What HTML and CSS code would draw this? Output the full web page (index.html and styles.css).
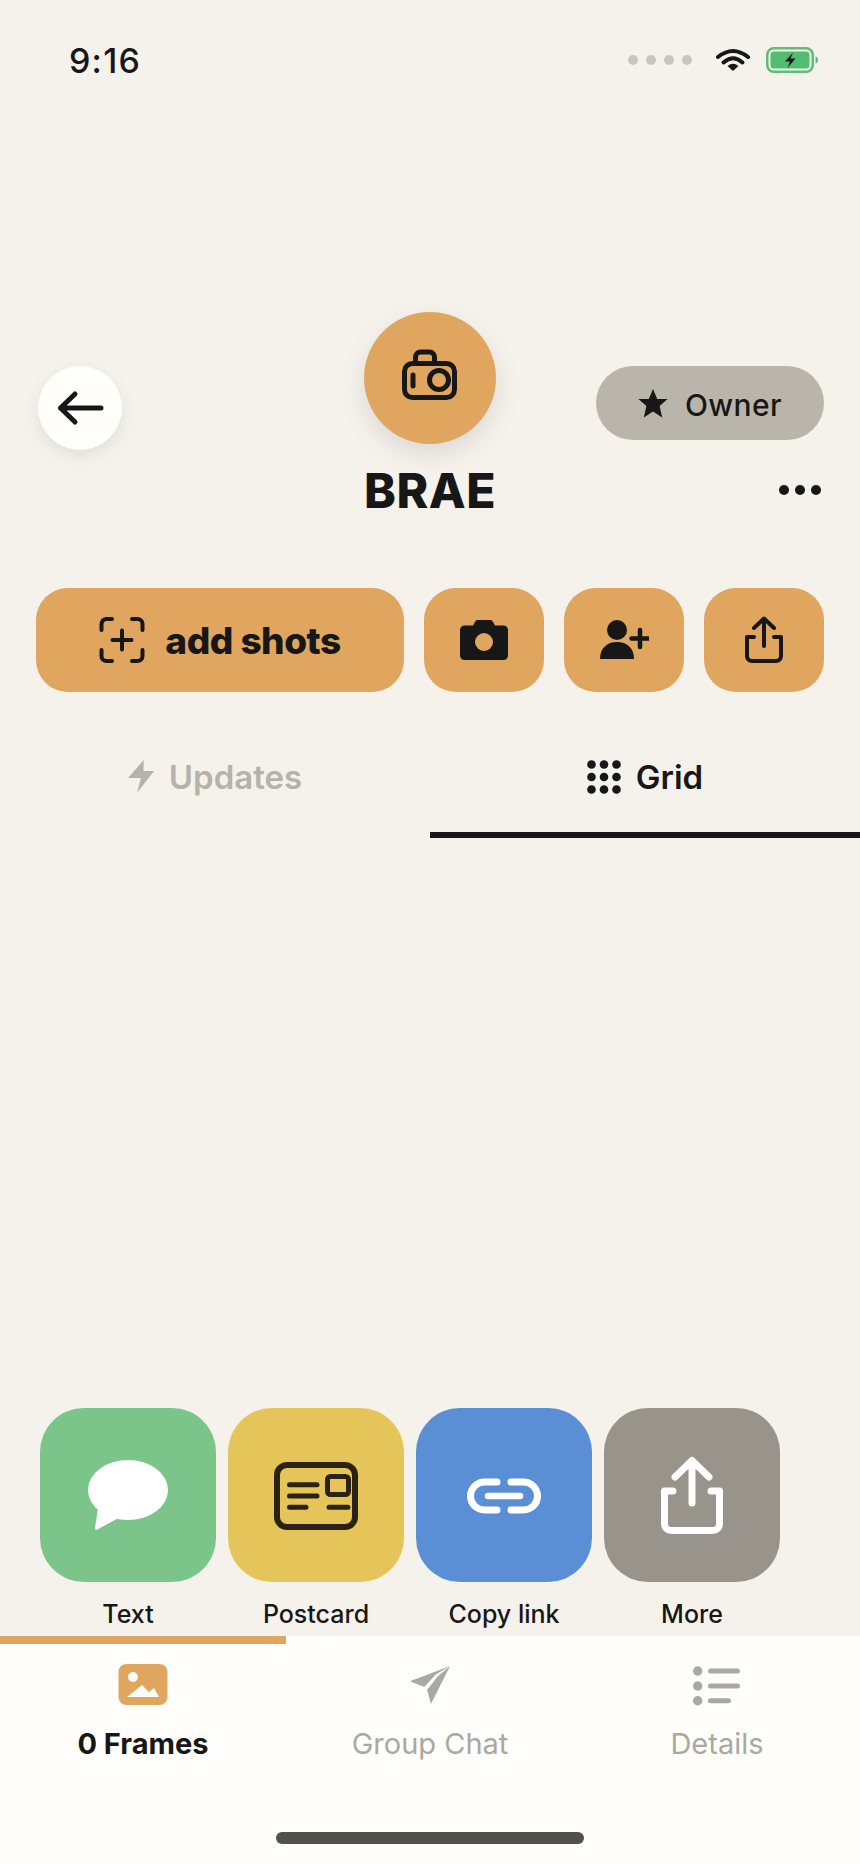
FILE: index.html
```html
<!DOCTYPE html>
<html lang="en">
<head>
<meta charset="utf-8">
<title>BRAE</title>
<link rel="stylesheet" href="styles.css">
</head>
<body>
<div class="app">
  <header class="status">
    <span class="time">9:16</span>
    <div class="status-right">
      <div class="signal"><i></i><i></i><i></i><i></i></div>
      <svg class="wifi" width="36" height="24" viewBox="0 0 36 24" fill="none" stroke="#171717" stroke-width="4" stroke-linecap="round">
        <path d="M3 9Q18-3 33 9"/>
        <path d="M8.500 14.500Q18 6 27.500 14.500"/>
        <path d="M12.500 18Q18 13.500 23.500 18L18 23Z" fill="#171717" stroke="none"/>
      </svg>
      <svg class="battery" width="53" height="26" viewBox="0 0 53 26">
        <rect x="1.250" y="1.250" width="45.500" height="23.500" rx="6.500" fill="none" stroke="#5cbf75" stroke-width="2.500"/>
        <rect x="4.500" y="4.500" width="39" height="17" rx="3.500" fill="#52bd6e"/>
        <path d="M49.500 9.500c2 .5 2.500 1.800 2.500 3.500s-.5 3-2.500 3.500z" fill="#5cbf75"/>
        <path d="M27 5.500 19 14.500h5l-2.500 6.500 8-9.500h-5z" fill="#171717"/>
      </svg>
    </div>
  </header>

  <section class="hero">
    <button class="back">
      <svg width="84" height="84" viewBox="0 0 84 84" fill="none" stroke="#171717" stroke-width="5" stroke-linecap="round" stroke-linejoin="round">
        <path d="M37 28 22.500 42 37 56M22.500 42H63"/>
      </svg>
    </button>
    <div class="avatar">
      <svg width="132" height="132" viewBox="0 0 132 132" fill="none" stroke="#171717" stroke-width="5" stroke-linecap="round" stroke-linejoin="round">
        <rect x="40.500" y="51.500" width="50" height="34" rx="8"/>
        <path d="M51.500 50v-5a5 5 0 0 1 5-5h9a5 5 0 0 1 5 5v5"/>
        <path d="M49 63V74"/>
        <circle cx="75" cy="68" r="9.500"/>
      </svg>
    </div>
    <div class="owner">
      <svg width="30" height="29" viewBox="0 0 30 29"><path d="M15 0l4.200 10h10.400l-8 7 2.600 11.500L15 22.500 5.800 28.500 8.400 17l-8-7h10.400z" fill="#171717"/></svg>
      <span class="owner-text">Owner</span>
    </div>
    <h1 class="title">BRAE</h1>
    <div class="more"><i></i><i></i><i></i></div>
  </section>

  <nav class="actions">
    <button class="action action-wide">
      <svg width="46" height="46" viewBox="0 0 46 46" fill="none" stroke="#171717" stroke-width="4" stroke-linecap="round" stroke-linejoin="round">
        <path d="M2.500 13V7a5 5 0 0 1 5-5H13M33 2h5.500a5 5 0 0 1 5 5v6M2.500 33v6a5 5 0 0 0 5 5H13M33 44h5.500a5 5 0 0 0 5-5v-6M23 13.500V32.500M13.500 23H32.500"/>
      </svg>
      <span>add shots</span>
    </button>
    <button class="action">
      <svg width="48" height="40" viewBox="0 0 48 40">
        <path d="M4.500 5.500H13L15 2a3 3 0 0 1 2.500-2h13A3 3 0 0 1 33 2l2 3.500h8.500A4.500 4.500 0 0 1 48 10v25.500a4.500 4.500 0 0 1-4.500 4.500h-39A4.500 4.500 0 0 1 0 35.500V10a4.500 4.500 0 0 1 4.500-4.500z" fill="#171717"/>
        <circle cx="24" cy="22" r="9" fill="#e0a55f"/>
      </svg>
    </button>
    <button class="action">
      <svg width="50" height="40" viewBox="0 0 50 40">
        <circle cx="18" cy="10" r="10" fill="#171717"/>
        <path d="M1 39C1 28 8 22 18 22s17 6 17 17z" fill="#171717"/>
        <path d="M41 10V27M32.500 18.500H49.500" stroke="#171717" stroke-width="4.500" stroke-linecap="round" fill="none"/>
      </svg>
    </button>
    <button class="action">
      <svg width="48" height="52" viewBox="0 0 48 52" fill="none" stroke="#171717" stroke-width="4" stroke-linecap="round" stroke-linejoin="round">
        <path d="M14 14 24 4.500 34 14M24 5V32"/>
        <path d="M14 23H7V42a5 5 0 0 0 5 5H36a5 5 0 0 0 5-5V23H34"/>
      </svg>
    </button>
  </nav>

  <div class="tabs">
    <div class="tab tab-muted">
      <svg width="26" height="34" viewBox="0 0 26 34"><path d="M15.700 0 0 18H13L9 33 26 11H15.500z" fill="#b5b2aa"/></svg>
      <span>Updates</span>
    </div>
    <div class="tab tab-active">
      <svg width="34" height="34" viewBox="0 0 34 34" fill="#171717">
        <circle cx="4.500" cy="4.500" r="4.300"/><circle cx="17" cy="4.500" r="4.300"/><circle cx="29.500" cy="4.500" r="4.300"/>
        <circle cx="4.500" cy="17" r="4.300"/><circle cx="17" cy="17" r="4.300"/><circle cx="29.500" cy="17" r="4.300"/>
        <circle cx="4.500" cy="29.500" r="4.300"/><circle cx="17" cy="29.500" r="4.300"/><circle cx="29.500" cy="29.500" r="4.300"/>
      </svg>
      <span>Grid</span>
    </div>
  </div>

  <main class="content"></main>

  <section class="share">
    <div class="share-item">
      <div class="tile tile-green">
        <svg width="176" height="174" viewBox="0 0 176 174">
          <ellipse cx="88" cy="82" rx="40" ry="30" fill="#fff"/>
          <path d="M58 100 55 120a1.500 1.500 0 0 0 2.500 1.500L82 108z" fill="#fff"/>
        </svg>
      </div>
      <span class="share-label">Text</span>
    </div>
    <div class="share-item">
      <div class="tile tile-yellow">
        <svg width="176" height="174" viewBox="0 0 176 174" fill="none" stroke="#2b2211" stroke-linecap="round" stroke-linejoin="round">
          <rect x="49" y="57" width="78" height="62" rx="10" stroke-width="6"/>
          <rect x="99.500" y="68.500" width="21" height="18" rx="3" stroke-width="5"/>
          <path d="M61.500 76.700H89M61.500 88H89M61.500 99.300H78M101 99.300H120" stroke-width="5"/>
        </svg>
      </div>
      <span class="share-label">Postcard</span>
    </div>
    <div class="share-item">
      <div class="tile tile-blue">
        <svg width="176" height="174" viewBox="0 0 176 174" fill="none" stroke="#fff" stroke-linecap="round">
          <path d="M81 74H68.500a14 14 0 0 0 0 28H81M95 74h12.500a14 14 0 0 1 0 28H95" stroke-width="7"/>
          <path d="M72 88H104" stroke-width="6.500"/>
        </svg>
      </div>
      <span class="share-label">Copy link</span>
    </div>
    <div class="share-item">
      <div class="tile tile-gray">
        <svg width="176" height="174" viewBox="0 0 176 174" fill="none" stroke="#fff" stroke-width="7" stroke-linecap="round" stroke-linejoin="round">
          <path d="M71 69 88 52.500 105 69M88 53V95"/>
          <path d="M69 83H60.500V116a6.500 6.500 0 0 0 6.500 6.500H109a6.500 6.500 0 0 0 6.500-6.500V83H107"/>
        </svg>
      </div>
      <span class="share-label">More</span>
    </div>
  </section>

  <footer class="footer">
    <div class="nav">
      <div class="nav-item nav-active">
        <svg width="50" height="42" viewBox="0 0 50 42">
          <rect x=".5" width="49" height="41" rx="8" fill="#e0a55f"/>
          <circle cx="15" cy="13" r="5" fill="#fffefb"/>
          <path d="M9 33 24 21l7 7 5-4 5 9z" fill="#fffefb"/>
        </svg>
        <span>0 Frames</span>
      </div>
      <div class="nav-item">
        <svg width="46" height="44" viewBox="0 0 46 44" fill="#a9a8a1">
          <path d="M44 2 2 18l15 6 12-13z"/>
          <path d="M44 2 31 13 20 27l4 15z"/>
        </svg>
        <span>Group Chat</span>
      </div>
      <div class="nav-item">
        <svg width="52" height="42" viewBox="0 0 52 42" fill="#a9a8a1">
          <circle cx="6.700" cy="7" r="4.700"/><circle cx="6.700" cy="22" r="4.700"/><circle cx="6.700" cy="36.700" r="4.700"/>
          <path d="M19.500 7H46.500M19.500 22H46.500M19.500 36.700H37.500" stroke="#a9a8a1" stroke-width="5" stroke-linecap="round"/>
        </svg>
        <span>Details</span>
      </div>
    </div>
    <div class="home-indicator"></div>
  </footer>
</div>
</body>
</html>
```

FILE: styles.css
```css
* {
  box-sizing: border-box;
}

html,
body {
  margin: 0;
  padding: 0;
}

body {
  background: #f5f2ec;
  color: #171717;
  font-family: Inter, "Liberation Sans", sans-serif;
}

button {
  border: 0;
  padding: 0;
  font: inherit;
  color: inherit;
  cursor: pointer;
}

svg {
  display: block;
}

.app {
  width: 860px;
  height: 1864px;
  display: flex;
  flex-direction: column;
  overflow: hidden;
}

/* status bar */
.status {
  height: 120px;
  padding: 0 41px 0 69px;
  display: flex;
  align-items: center;
  justify-content: space-between;
}

.time {
  font-size: 34px;
  font-weight: 500;
  letter-spacing: 1.2px;
}

.status-right {
  display: flex;
  align-items: center;
}

.signal {
  display: flex;
  gap: 8px;
  margin-right: 23px;
}

.signal i {
  width: 10px;
  height: 10px;
  border-radius: 50%;
  background: #c9c6c0;
}

.wifi {
  margin-right: 15px;
}

/* hero */
.hero {
  margin-top: 192px;
  padding: 0 36px;
  display: grid;
  grid-template-columns: 1fr 132px 1fr;
  column-gap: 0;
}

.back {
  margin: 54px 0 0 2px;
  width: 84px;
  height: 84px;
  border-radius: 50%;
  background: #fffefb;
  box-shadow: 0 6px 16px rgba(0, 0, 0, 0.08);
}

.avatar {
  width: 132px;
  height: 132px;
  border-radius: 50%;
  background: #e0a55f;
  box-shadow: 0 10px 26px rgba(0, 0, 0, 0.1);
}

.owner {
  margin-top: 54px;
  justify-self: end;
  width: 228px;
  height: 74px;
  border-radius: 37px;
  background: #b9b5aa;
  display: flex;
  align-items: center;
  justify-content: center;
  gap: 17px;
  font-size: 30px;
  font-weight: 500;
  letter-spacing: 0.4px;
}

.owner-text {
  padding-top: 3px;
}

.title {
  grid-column: 2;
  margin: 13px 0 0;
  justify-self: center;
  white-space: nowrap;
  font-size: 48px;
  line-height: 56px;
  font-weight: 800;
  letter-spacing: 0.5px;
}

.more {
  grid-column: 3;
  justify-self: end;
  margin: 35px 3px 0 0;
  display: flex;
  gap: 6px;
}

.more i {
  width: 10px;
  height: 10px;
  border-radius: 50%;
  background: #171717;
}

/* action buttons */
.actions {
  margin-top: 69px;
  padding: 0 36px;
  display: flex;
  gap: 20px;
}

.action {
  width: 120px;
  height: 104px;
  border-radius: 32px;
  background: #e0a55f;
  display: flex;
  align-items: center;
  justify-content: center;
}

.action-wide {
  width: 368px;
  gap: 20px;
  font-size: 37px;
  font-weight: 800;
  letter-spacing: -0.5px;
}

/* tabs */
.tabs {
  display: grid;
  grid-template-columns: 1fr 1fr;
}

.tab {
  height: 146px;
  padding-top: 30px;
  display: flex;
  align-items: center;
  justify-content: center;
  gap: 15px;
  font-size: 33px;
  font-weight: 600;
  border-bottom: 6px solid transparent;
}

.tab-muted {
  color: #b5b2aa;
}

.tab-active {
  border-bottom-color: #171717;
}

.content {
  flex: 1;
}

/* share row */
.share {
  padding-left: 40px;
  display: flex;
  gap: 12px;
}

.share-item {
  width: 176px;
  display: flex;
  flex-direction: column;
  align-items: center;
}

.tile {
  width: 176px;
  height: 174px;
  border-radius: 44px;
}

.tile-green {
  background: #7cc58a;
}

.tile-yellow {
  background: #e5c55a;
}

.tile-blue {
  background: #5a8fd6;
}

.tile-gray {
  background: #98938b;
}

.share-label {
  height: 54px;
  line-height: 64px;
  font-size: 25px;
  font-weight: 500;
}

/* bottom nav */
.footer {
  height: 228px;
  background: #fffefb;
}

.nav {
  display: grid;
  grid-template-columns: 286px 288px 286px;
  height: 196px;
}

.nav-item {
  border-top: 8px solid transparent;
  padding-top: 20px;
  display: flex;
  flex-direction: column;
  align-items: center;
  font-size: 29px;
  color: #a9a8a1;
}

.nav-item svg {
  height: 42px;
}

.nav-item span {
  margin-top: 21px;
  line-height: 34px;
}

.nav-active {
  border-top-color: #e0a55f;
  color: #171717;
  font-weight: 700;
}

.home-indicator {
  width: 308px;
  height: 12px;
  margin-left: 276px;
  border-radius: 6px;
  background: #505050;
}
```
